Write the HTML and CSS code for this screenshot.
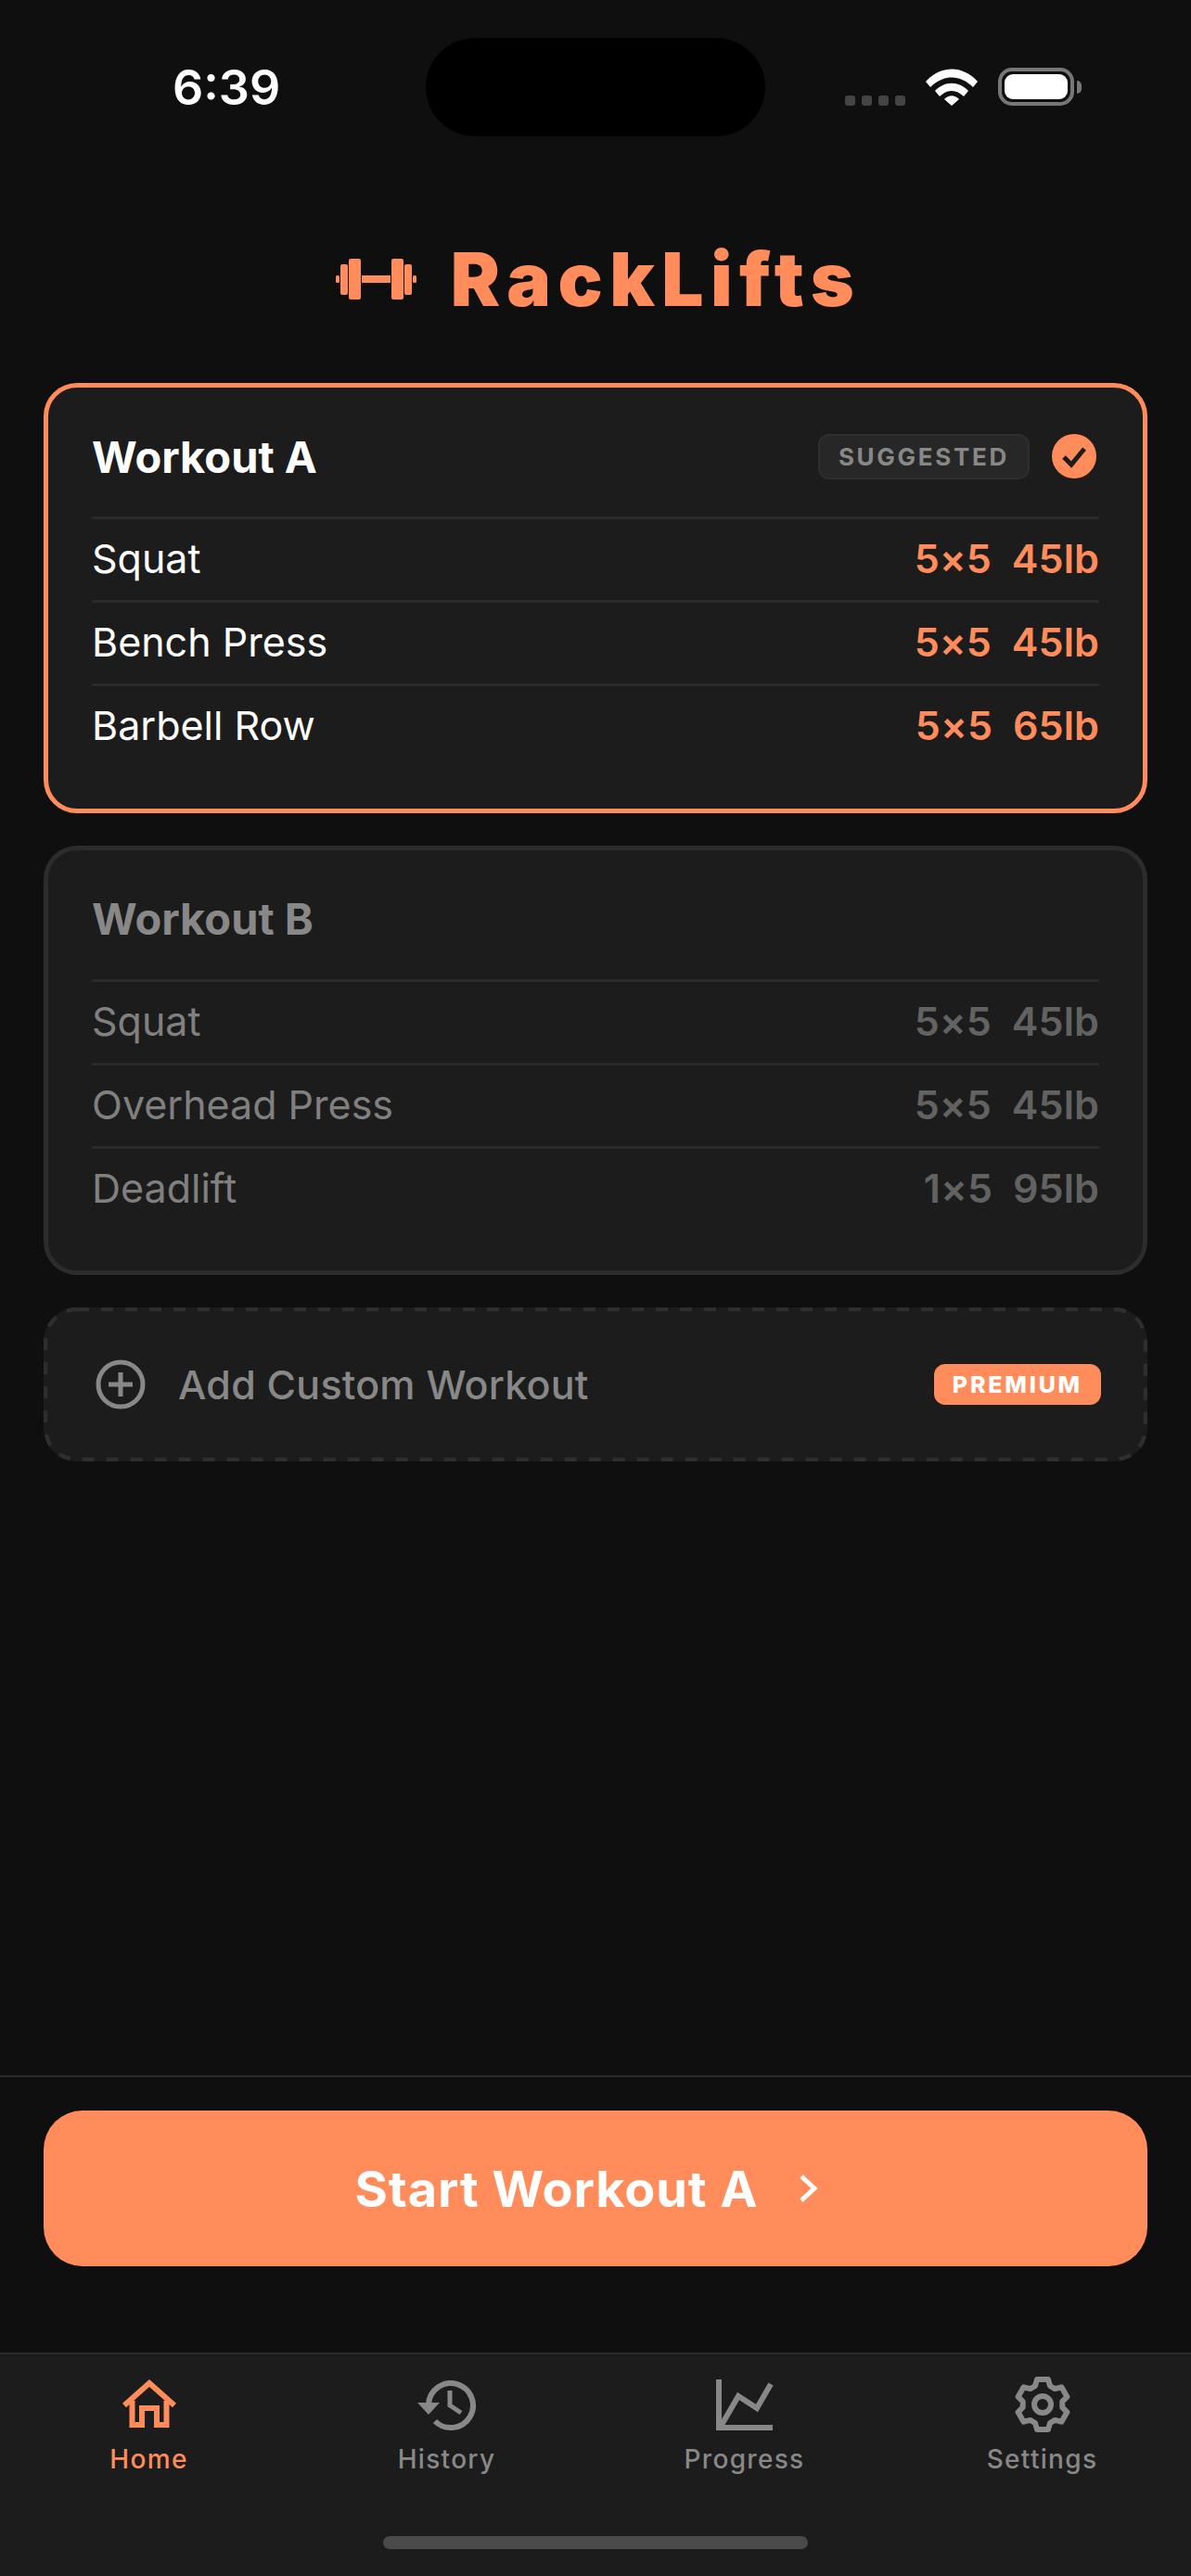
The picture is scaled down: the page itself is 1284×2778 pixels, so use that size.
FILE: index.html
```html
<!DOCTYPE html>
<html lang="en">
<head>
    <meta charset="UTF-8">
    <meta name="viewport" content="width=device-width, initial-scale=1.0">
    <title>RackLifts</title>
    <link rel="stylesheet" href="styles.css">
</head>
<body>
    <div class="screen">
        <div class="statusBar">
            <span class="time">6:39</span>
            <div class="island"></div>
            <div class="statusIcons">
                <div class="signalDots"><i></i><i></i><i></i><i></i></div>
                <svg class="wifi" width="56" height="40" viewBox="0 0 56 40">
                    <path d="M0 14 C16 -4 40 -4 56 14 L51 20 C37 6 19 6 5 20 Z M10 24 C20 13 36 13 46 24 L41 30 C33 22 23 22 15 30 Z M20 33 C25 28 31 28 36 33 L28 40 Z" fill="#fff"/>
                </svg>
                <div class="battery"><div class="batteryFill"></div></div>
                <div class="batteryCap"></div>
            </div>
        </div>

        <div class="logo">
            <svg class="logoIcon" width="87" height="44" viewBox="0 0 87 44">
                <rect x="0" y="18" width="4" height="8" rx="1.5"/>
                <rect x="5" y="6" width="8" height="33" rx="2"/>
                <rect x="14" y="0" width="13" height="44" rx="2"/>
                <rect x="28" y="18" width="31" height="8"/>
                <rect x="60" y="0" width="13" height="44" rx="2"/>
                <rect x="74" y="6" width="8" height="33" rx="2"/>
                <rect x="83" y="18" width="4" height="8" rx="1.5"/>
            </svg>
            <span class="logoText">RackLifts</span>
        </div>

        <div class="cards">
            <div class="card cardSelected">
                <div class="cardHead">
                    <span class="cardTitle">Workout A</span>
                    <span class="suggested">SUGGESTED</span>
                    <svg class="check" width="48" height="48" viewBox="0 0 48 48">
                        <circle cx="24" cy="24" r="24" fill="#ff8c5a"/>
                        <path d="M13 25 L21 33 L35 16" fill="none" stroke="#1c1c1c" stroke-width="5"/>
                    </svg>
                </div>
                <div class="row"><span>Squat</span><span class="value">5×5&nbsp;&nbsp;45lb</span></div>
                <div class="row"><span>Bench Press</span><span class="value">5×5&nbsp;&nbsp;45lb</span></div>
                <div class="row"><span>Barbell Row</span><span class="value">5×5&nbsp;&nbsp;65lb</span></div>
            </div>

            <div class="card cardDim">
                <div class="cardHead">
                    <span class="cardTitle">Workout B</span>
                </div>
                <div class="row"><span>Squat</span><span class="value">5×5&nbsp;&nbsp;45lb</span></div>
                <div class="row"><span>Overhead Press</span><span class="value">5×5&nbsp;&nbsp;45lb</span></div>
                <div class="row"><span>Deadlift</span><span class="value">1×5&nbsp;&nbsp;95lb</span></div>
            </div>

            <div class="addCard">
                <svg class="dashes" width="1190" height="166" viewBox="0 0 1190 166">
                    <rect x="2" y="2" width="1186" height="162" rx="34" fill="none" stroke="#2e2e2e" stroke-width="4.5" stroke-dasharray="13 13"/>
                </svg>
                <svg class="plus" width="54" height="54" viewBox="0 0 54 54">
                    <circle cx="27" cy="27" r="24" fill="none" stroke="#888" stroke-width="5"/>
                    <path d="M27 14 V40 M14 27 H40" stroke="#888" stroke-width="5"/>
                </svg>
                <span class="addText">Add Custom Workout</span>
                <span class="premium">PREMIUM</span>
            </div>
        </div>

        <div class="footer">
            <div class="startButton">
                <span>Start Workout A</span>
                <svg width="22" height="32" viewBox="0 0 22 32">
                    <path d="M3 3 L17 16 L3 29" fill="none" stroke="#fff" stroke-width="5"/>
                </svg>
            </div>
        </div>

        <div class="tabBar">
            <div class="tabs">
                <div class="tab tabActive">
                    <svg width="60" height="60" viewBox="0 -4 60 60">
                        <path d="M3 27 L30 3 L57 27" fill="none" stroke="#ff8c5a" stroke-width="6"/>
                        <path d="M11.5 22 V48 H22 V30 H38 V48 H48.5 V22" fill="none" stroke="#ff8c5a" stroke-width="6"/>
                    </svg>
                    <span>Home</span>
                </div>
                <div class="tab">
                    <svg width="66" height="60" viewBox="0 0 66 60">
                        <path d="M13 30 A24 24 0 1 1 20 48" fill="none" stroke="#888" stroke-width="6"/>
                        <path d="M1 28 H25 L13 41 Z" fill="#888"/>
                        <path d="M36 15 V31 L48 39" fill="none" stroke="#888" stroke-width="5"/>
                    </svg>
                    <span>History</span>
                </div>
                <div class="tab">
                    <svg width="62" height="60" viewBox="0 0 62 60">
                        <path d="M3 3 V55 H61" fill="none" stroke="#888" stroke-width="6"/>
                        <path d="M6 52 L24 21 L44 34 L59 8" fill="none" stroke="#888" stroke-width="6"/>
                    </svg>
                    <span>Progress</span>
                </div>
                <div class="tab">
                    <svg width="60" height="60" viewBox="-30 -30 60 60">
                        <path d="M-8 -20 L-6 -27 L6 -27 L8 -20 L13.3 -16.9 L20.4 -18.7 L26.4 -8.3 L21.3 -3.1 L21.3 3.1 L26.4 8.3 L20.4 18.7 L13.3 16.9 L8 20 L6 27 L-6 27 L-8 20 L-13.3 16.9 L-20.4 18.7 L-26.4 8.3 L-21.3 3.1 L-21.3 -3.1 L-26.4 -8.3 L-20.4 -18.7 L-13.3 -16.9 Z" fill="none" stroke="#888" stroke-width="6" stroke-linejoin="round"/>
                        <circle r="9" fill="none" stroke="#888" stroke-width="6"/>
                    </svg>
                    <span>Settings</span>
                </div>
            </div>
            <div class="homeIndicator"></div>
        </div>
    </div>
</body>
</html>
```

FILE: styles.css
```css
* {
    box-sizing: border-box;
}

body {
    margin: 0;
    background-color: #0f0f0f;
    font-family: Inter, "Liberation Sans", sans-serif;
    color: white;
}

.screen {
    display: flex;
    flex-direction: column;
    width: 1284px;
    height: 2778px;
    overflow: hidden;
}

.statusBar {
    display: grid;
    grid-template-columns: 1fr 366px 1fr;
    align-items: start;
    height: 147px;
    padding-top: 41px;
    flex-shrink: 0;
}

.time {
    justify-self: start;
    margin-left: 186px;
    margin-top: 24px;
    font-size: 52px;
    line-height: 60px;
    font-weight: 600;
}

.island {
    height: 106px;
    border-radius: 53px;
    background-color: black;
}

.statusIcons {
    display: flex;
    align-items: center;
    margin-left: 86px;
    margin-top: 32px;
    height: 41px;
}

.signalDots {
    display: flex;
    gap: 7px;
    align-self: flex-end;
    margin-right: 22px;
}

.signalDots i {
    width: 11px;
    height: 11px;
    border-radius: 3px;
    background-color: #444;
}

.wifi {
    margin-right: 22px;
}

.battery {
    width: 82px;
    height: 41px;
    padding: 3px;
    border: 4px solid #777;
    border-radius: 15px;
}

.batteryFill {
    height: 100%;
    border-radius: 9px;
    background-color: white;
}

.batteryCap {
    width: 5px;
    height: 14px;
    margin-left: 3px;
    border-radius: 0 5px 5px 0;
    background-color: #777;
}

.logo {
    display: flex;
    align-items: center;
    justify-content: center;
    gap: 37px;
    height: 86px;
    margin-top: 111px;
    padding-left: 6px;
    flex-shrink: 0;
}

.logoIcon {
    fill: #ff8c5a;
}

.logoText {
    font-size: 80px;
    font-weight: 900;
    letter-spacing: 7.5px;
    line-height: 86px;
    color: #ff8c5a;
}

.cards {
    display: flex;
    flex-direction: column;
    gap: 35px;
    margin-top: 69px;
    padding: 0 47px;
}

.card {
    height: 463.5px;
    padding: 0 47px;
    border: 5px solid #2c2c2c;
    border-radius: 36px;
    background-color: #1c1c1c;
}

.cardSelected {
    border-color: #ff8c5a;
}

.cardHead {
    display: flex;
    align-items: center;
    height: 139px;
    padding-top: 9px;
}

.cardTitle {
    margin-right: auto;
    font-size: 47px;
    font-weight: 700;
}

.suggested {
    display: flex;
    align-items: center;
    height: 49px;
    padding: 0 20px;
    margin-right: 24px;
    border: 2px solid #2e2e2e;
    border-radius: 12px;
    background-color: #272727;
    font-size: 26px;
    font-weight: 700;
    letter-spacing: 2.7px;
    color: #888;
}

.check {
    margin-right: 3px;
}

.row {
    display: flex;
    justify-content: space-between;
    align-items: center;
    height: 90px;
    padding-bottom: 3px;
    border-top: 3px solid #2a2a2a;
    font-size: 43px;
}

.value {
    font-weight: 600;
    letter-spacing: 0.1px;
    color: #ff8c5a;
}

.cardDim .cardTitle {
    color: #888;
}

.cardDim .row {
    color: #808080;
}

.cardDim .value {
    color: #626262;
}

.addCard {
    position: relative;
    display: flex;
    align-items: center;
    height: 166px;
    padding: 0 50px 0 56px;
    border-radius: 36px;
    background-color: #1c1c1c;
}

.dashes {
    position: absolute;
    top: 0;
    left: 0;
}

.addText {
    margin-left: 35px;
    margin-right: auto;
    font-size: 43px;
    font-weight: 500;
    letter-spacing: 0.2px;
    color: #888;
}

.premium {
    display: flex;
    align-items: center;
    height: 44px;
    padding: 0 20px;
    border-radius: 12px;
    background-color: #ff8c5a;
    font-size: 25px;
    font-weight: 800;
    letter-spacing: 2.8px;
    color: white;
}

.footer {
    margin-top: auto;
    padding: 36px 47px 93px;
    border-top: 2px solid #2a2a2a;
}

.startButton {
    display: flex;
    align-items: center;
    justify-content: center;
    gap: 44px;
    height: 168px;
    padding-right: 18px;
    border-radius: 42px;
    background-color: #ff8c5a;
    font-size: 54px;
    font-weight: 700;
    letter-spacing: 0.9px;
    color: white;
}

.tabBar {
    height: 241px;
    flex-shrink: 0;
    border-top: 2px solid #2a2a2a;
    background-color: #1c1c1c;
}

.tabs {
    display: grid;
    grid-template-columns: repeat(4, 1fr);
    padding-top: 24px;
}

.tab {
    display: flex;
    flex-direction: column;
    align-items: center;
    font-size: 28px;
    font-weight: 500;
    color: #888;
}

.tab span {
    margin-top: 12px;
    letter-spacing: 1.3px;
}

.tabActive {
    color: #ff8c5a;
}

.homeIndicator {
    width: 458px;
    height: 14px;
    margin: 66px auto 0;
    border-radius: 7px;
    background-color: #4a4a4a;
}
```
